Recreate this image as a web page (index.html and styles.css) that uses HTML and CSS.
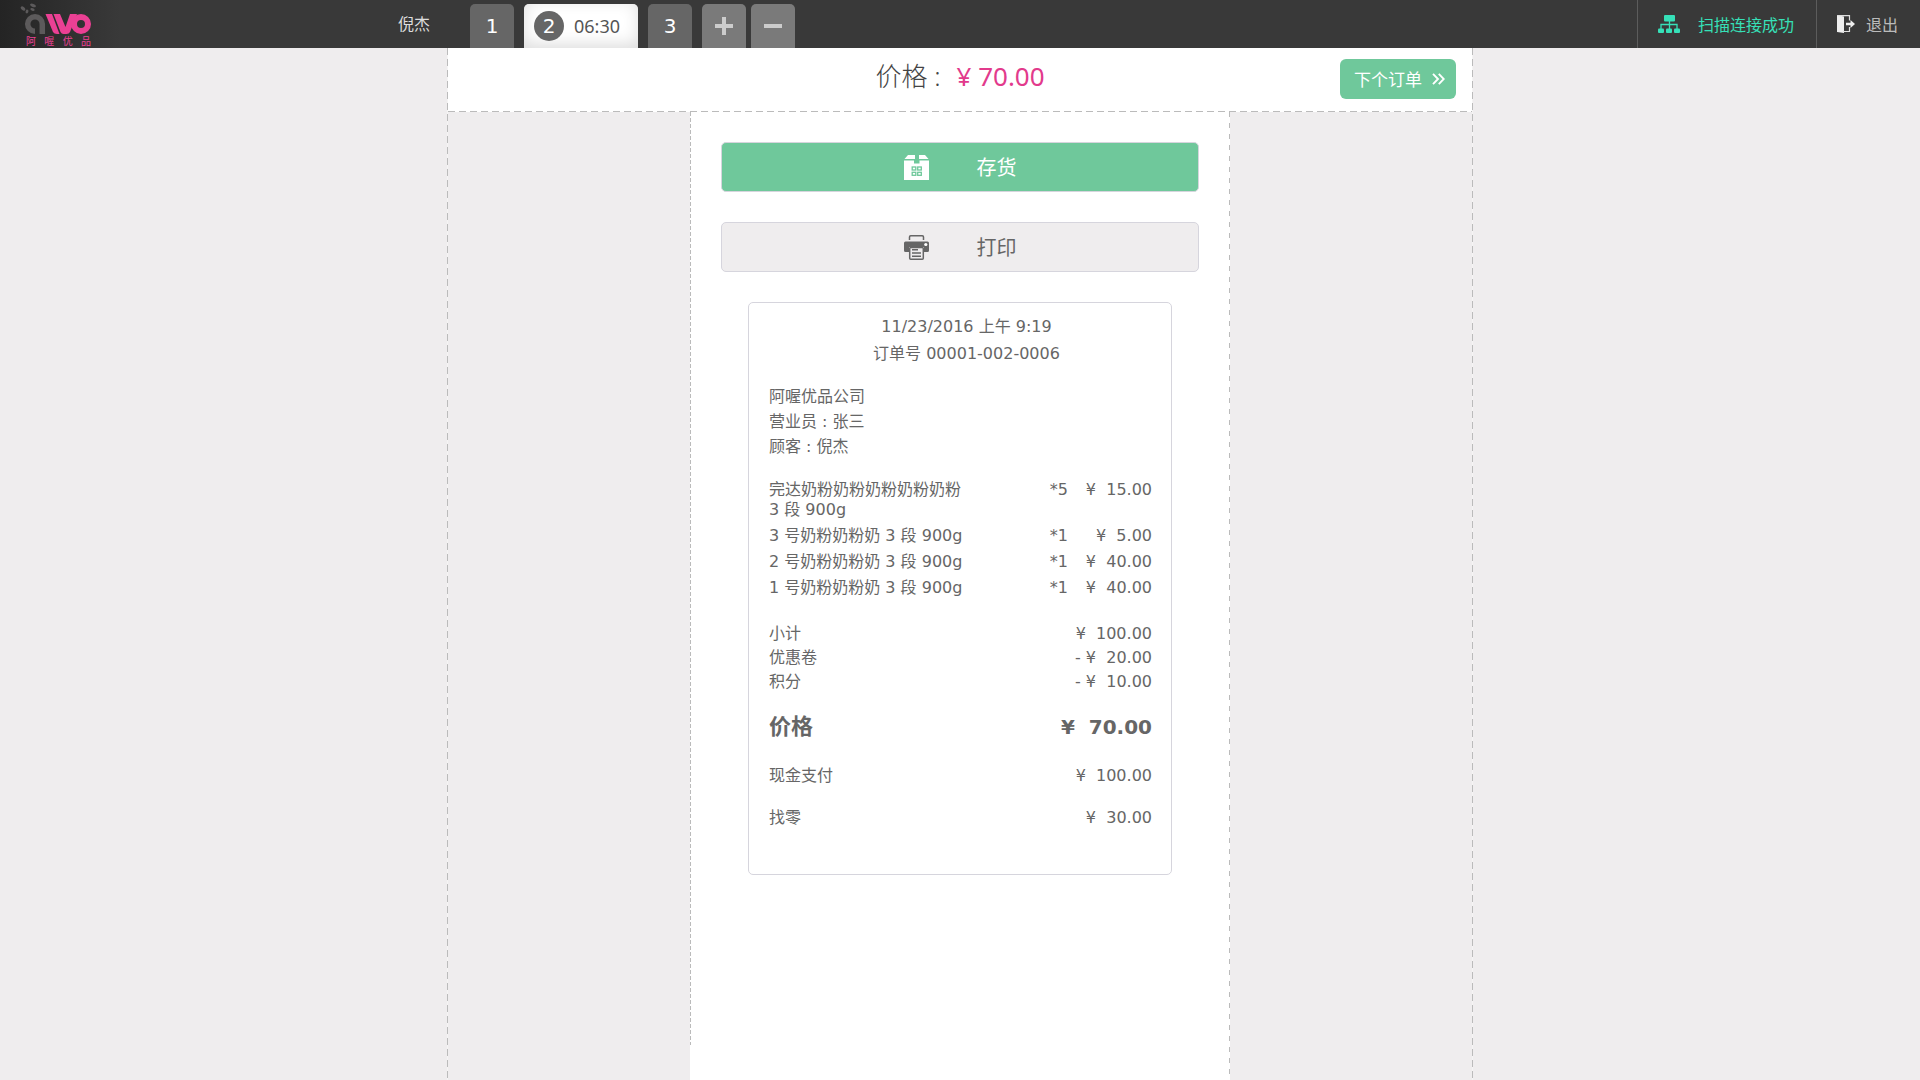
FILE: index.html
```html
<!DOCTYPE html>
<html lang="zh-CN">
<head>
<meta charset="utf-8">
<meta name="viewport" content="width=device-width, initial-scale=1">
<title>阿喔优品 收银</title>
<link rel="stylesheet" href="styles.css">
</head>
<body>
<header class="topbar">
  <div class="topbar-start">
    <a class="logo" href="#" aria-label="阿喔优品">
      <svg class="logo-mark" viewBox="0 0 72 32" aria-hidden="true">
        <g fill="#5c5a5b">
          <ellipse cx="3" cy="5.500" rx="1.600" ry="2.600" transform="rotate(-50 3 5.500)"/>
          <ellipse cx="7" cy="8.500" rx="1.400" ry="1.900" transform="rotate(20 7 8.500)"/>
          <ellipse cx="13" cy="2.400" rx="3" ry="1.600" transform="rotate(20 13 2.400)"/>
          <ellipse cx="12.500" cy="6.500" rx="2.200" ry="1.300" transform="rotate(20 12.500 6.500)"/>
        </g>
        <path d="M15 28.300A7.300 7.300 0 1 1 22.300 21V31" fill="none" stroke="#5c5a5b" stroke-width="5.500"/>
        <path d="M25.500 11H32L39.500 31H37Q34 31 33 29Z" fill="#eb4094"/>
        <path d="M33.500 11H40L45.500 24L50 11H57L50 29Q49 31 46.500 31H43.500Q41.500 31 40.500 29Z" fill="#eb4094"/>
        <circle cx="61" cy="21" r="7" fill="none" stroke="#eb4094" stroke-width="6"/>
      </svg>
      <span class="logo-name"><span>阿</span><span>喔</span><span>优</span><span>品</span></span>
    </a>
    <span class="user">倪杰</span>
  </div>
  <nav class="tabs" aria-label="订单">
    <button class="tab" type="button">1</button>
    <button class="tab tab-active" type="button"><span class="tab-number">2</span><span class="tab-time">06:30</span></button>
    <button class="tab" type="button">3</button>
    <span class="tab-tools">
      <button class="tab tab-tool" type="button" aria-label="新增订单">
        <svg width="18" height="18" viewBox="0 0 18 18"><path d="M9 0v18M0 9h18" stroke="currentColor" stroke-width="4"/></svg>
      </button>
      <button class="tab tab-tool" type="button" aria-label="删除订单">
        <svg width="18" height="18" viewBox="0 0 18 18"><path d="M0 9h18" stroke="currentColor" stroke-width="4"/></svg>
      </button>
    </span>
  </nav>
  <div class="topbar-end">
    <span class="status">
      <svg width="22" height="18" viewBox="0 0 22 18"><g fill="currentColor"><rect x="6" width="11" height="6.500" rx="1"/><rect y="13.500" width="6" height="4.500" rx="1"/><rect x="8" y="13.500" width="6" height="4.500" rx="1"/><rect x="16" y="13.500" width="6" height="4.500" rx="1"/></g><path d="M11.500 6v8M3 14V9.500H19V14" fill="none" stroke="currentColor" stroke-width="1.300"/></svg>
      扫描连接成功
    </span>
    <a class="logout" href="#">
      <svg width="18" height="18" viewBox="0 0 18 18"><path d="M0 0L7 1.500V18L0 17Z" fill="#eee"/><path d="M1 .6H12.500V5.500M12.500 12V16.500H6" fill="none" stroke="#ddd" stroke-width="1.200"/><path d="M9 7.800H13.500V5L18 9L13.500 13V10.200H9Z" fill="#eee"/></svg>
      退出
    </a>
  </div>
</header>

<main class="order">
  <section class="order-head">
    <p class="price"><span>价格 :</span><strong>¥ 70.00</strong></p>
    <button class="next" type="button">下个订单
      <svg width="13" height="12" viewBox="0 0 13 12"><path d="M1 .8L6 6L1 11.200M6.800 .8L11.800 6L6.800 11.200" fill="none" stroke="currentColor" stroke-width="1.900"/></svg>
    </button>
  </section>

  <div class="panel">
    <button class="action action-store" type="button">
      <svg width="25" height="25" viewBox="0 0 25 25"><path d="M4 0H11V4H0.500ZM15 0H21L24.500 4H15Z" fill="#fff"/><path d="M0 5.500H10V8.500H15.500V5.500H25V25H0Z" fill="#fff"/><g fill="none" stroke="#6fc89b" stroke-width="1.300"><rect x="8.200" y="12" width="3.600" height="3"/><rect x="13.700" y="12" width="3.600" height="3"/><rect x="8.200" y="17.300" width="3.600" height="3"/><rect x="13.700" y="17.300" width="3.600" height="3"/></g></svg>
      <span>存货</span>
    </button>
    <button class="action" type="button">
      <svg width="25" height="25" viewBox="0 0 25 25"><path d="M5.500 5V2Q5.500 .8 6.700 .8H18.300Q19.500 .8 19.500 2V5" fill="none" stroke="#666" stroke-width="1.500"/><path d="M1.500 6.500H23.500Q25 6.500 25 8V15.500Q25 17 23.500 17H20V12H5V17H1.500Q0 17 0 15.500V8Q0 6.500 1.500 6.500Z" fill="#666"/><circle cx="21.800" cy="9.500" r="1.600" fill="#fff"/><rect x="5.700" y="12.500" width="13.600" height="11.700" rx="1" fill="#efedee" stroke="#666" stroke-width="1.500"/><path d="M8 14.800H14M8 18H17M8 21.200H17" stroke="#666" stroke-width="1.600"/></svg>
      <span>打印</span>
    </button>

    <article class="receipt">
      <header class="receipt-head">
        <p>11/23/2016 上午 9:19</p>
        <p>订单号 00001-002-0006</p>
      </header>
      <div class="receipt-people">
        <p>阿喔优品公司</p>
        <p>营业员 : 张三</p>
        <p>顾客 : 倪杰</p>
      </div>
      <table class="items">
        <tbody>
          <tr><td class="item-name">完达奶粉奶粉奶粉奶粉奶粉 3 段 900g</td><td class="item-count">*5</td><td class="amount">¥  15.00</td></tr>
          <tr><td class="item-name">3 号奶粉奶粉奶 3 段 900g</td><td class="item-count">*1</td><td class="amount">¥  5.00</td></tr>
          <tr><td class="item-name">2 号奶粉奶粉奶 3 段 900g</td><td class="item-count">*1</td><td class="amount">¥  40.00</td></tr>
          <tr><td class="item-name">1 号奶粉奶粉奶 3 段 900g</td><td class="item-count">*1</td><td class="amount">¥  40.00</td></tr>
        </tbody>
      </table>
      <dl class="sums">
        <div class="sum"><dt>小计</dt><dd class="amount">¥  100.00</dd></div>
        <div class="sum"><dt>优惠卷</dt><dd class="amount">- ¥  20.00</dd></div>
        <div class="sum"><dt>积分</dt><dd class="amount">- ¥  10.00</dd></div>
        <div class="sum sum-total"><dt>价格</dt><dd class="amount">¥  70.00</dd></div>
        <div class="sum sum-paid"><dt>现金支付</dt><dd class="amount">¥  100.00</dd></div>
        <div class="sum"><dt>找零</dt><dd class="amount">¥  30.00</dd></div>
      </dl>
    </article>
  </div>
</main>
</body>
</html>
```
FILE: styles.css
```css
* { box-sizing: border-box; }

body {
  margin: 0;
  min-height: 100vh;
  display: flex;
  flex-direction: column;
  background: #efedee;
  color: #666;
  font: 16px/24px "DejaVu Sans", "Noto Sans CJK SC", sans-serif;
}

p, dl, dd { margin: 0; }
button { font: inherit; border: 0; padding: 0; cursor: pointer; }
a { color: inherit; text-decoration: none; }
svg { display: block; flex: none; }

/* Top bar */
.topbar {
  display: flex;
  height: 48px;
  background: linear-gradient(90deg, #242424, #393939 120px);
}
.topbar-start {
  flex: none;
  width: calc(50% - 490px);
  display: flex;
  justify-content: space-between;
  padding: 0 40px 0 20px;
}
.logo { display: flex; flex-direction: column; padding-top: 3px; }
.logo-mark { width: 72px; height: 32px; }
.logo-name {
  display: flex;
  justify-content: space-between;
  padding: 0 1px 0 6px;
  color: #eb4094;
  font: 10px/12px "Noto Sans CJK SC", sans-serif;
}
.user { color: #ddd; line-height: 46px; font-family: "Noto Sans CJK SC", sans-serif; }

.tabs { display: flex; gap: 10px; align-items: flex-end; }
.tab-tools { display: flex; gap: 5px; }
.tab {
  display: flex;
  align-items: center;
  justify-content: center;
  min-width: 44px;
  height: 44px;
  border-radius: 5px 5px 0 0;
  background: #666;
  color: #fff;
  font-size: 20px;
}
.tab-active {
  gap: 10px;
  padding: 0 18px 0 10px;
  background: #fff;
  box-shadow: inset 0 -4px 16px #ddd;
  color: #555;
}
.tab-number {
  width: 30px;
  border-radius: 50%;
  background: #666;
  color: #fff;
  line-height: 30px;
}
.tab-time { font: 18px/24px "Noto Sans", sans-serif; }
.tab-tool { background: #7a7a7a; color: #ccc; }

.topbar-end { display: flex; margin-left: auto; font-family: "Noto Sans CJK SC", sans-serif; }
.status, .logout {
  display: flex;
  align-items: center;
  padding-bottom: 1px;
  border-left: 1px solid #5c5c5c;
}
.status { gap: 18px; padding-left: 20px; padding-right: 22px; color: #36e0b8; }
.logout { gap: 11px; padding-left: 20px; padding-right: 22px; color: #bbb; }

/* Order column */
.order {
  flex: 1;
  width: 100%;
  max-width: 1026px;
  margin: 0 auto;
  padding: 0 1px;
  display: flex;
  flex-direction: column;
  background:
    repeating-linear-gradient(#bbb 0 7px, #f5f4f4 7px 11px) left / 1px 100% no-repeat,
    repeating-linear-gradient(#bbb 0 7px, #f5f4f4 7px 11px) right / 1px 100% no-repeat;
}
.order-head {
  display: grid;
  grid-template-columns: 1fr auto 1fr;
  align-items: center;
  height: 64px;
  padding: 0 16px 2px;
  background: repeating-linear-gradient(90deg, #bbb 0 7px, #fff 7px 11px) bottom / 100% 1px no-repeat #fff;
}
.price {
  grid-column: 2;
  display: flex;
  gap: 16px;
  padding-bottom: 6px;
  color: #444;
  font: 300 26px/36px "Noto Sans", "Noto Sans CJK SC", sans-serif;
}
.price strong { color: #e23a8c; font-weight: 400; }
.next {
  justify-self: end;
  display: flex;
  align-items: center;
  justify-content: space-between;
  width: 116px;
  height: 40px;
  padding: 0 11px 0 14px;
  border-radius: 6px;
  background: #6fc89b;
  color: #fff;
  font: 17px/24px "Noto Sans CJK SC", sans-serif;
}

.panel {
  flex: 1;
  width: 100%;
  max-width: 540px;
  margin: 0 auto;
  padding: 30px 31px;
  display: flex;
  flex-direction: column;
  gap: 30px;
  background:
    repeating-linear-gradient(#bbb 0 4px, #fff 4px 6px) left top / 1px calc(100% - 35px) no-repeat,
    repeating-linear-gradient(#bbb 0 5px, #fff 5px 11px) right top / 1px 100% no-repeat,
    #fff;
}
.action {
  display: flex;
  align-items: center;
  justify-content: center;
  gap: 48px;
  height: 50px;
  border: 1px solid #d6d5dd;
  border-radius: 5px;
  background: #efedee;
  color: #666;
  font: 20px/28px "Noto Sans CJK SC", sans-serif;
}
.action-store { background: #6fc89b; color: #fff; }

/* Receipt */
.receipt {
  width: 100%;
  max-width: 424px;
  margin: 0 auto;
  padding: 10px 19px 44px 20px;
  border: 1px solid #d6d5dd;
  border-radius: 5px;
}
.receipt-head { padding-left: 12px; text-align: center; line-height: 27px; }
.receipt-people { margin-top: 17px; line-height: 25px; }
.items { width: 100%; margin-top: 21px; border-collapse: collapse; line-height: 20px; }
.items td { padding: 0 0 6px; vertical-align: top; }
.items .item-name { width: 200px; }
.item-count { text-align: right; }
.items .amount { width: 84px; }
.amount { text-align: right; white-space: pre; }
.sums { margin-top: 18px; }
.sum { display: flex; justify-content: space-between; }
.sum-total { margin: 18px 0 22px; font-size: 20px; line-height: 30px; font-weight: bold; }
.sum-total dt { font-size: 22px; }
.sum-paid { margin-bottom: 18px; }
```
